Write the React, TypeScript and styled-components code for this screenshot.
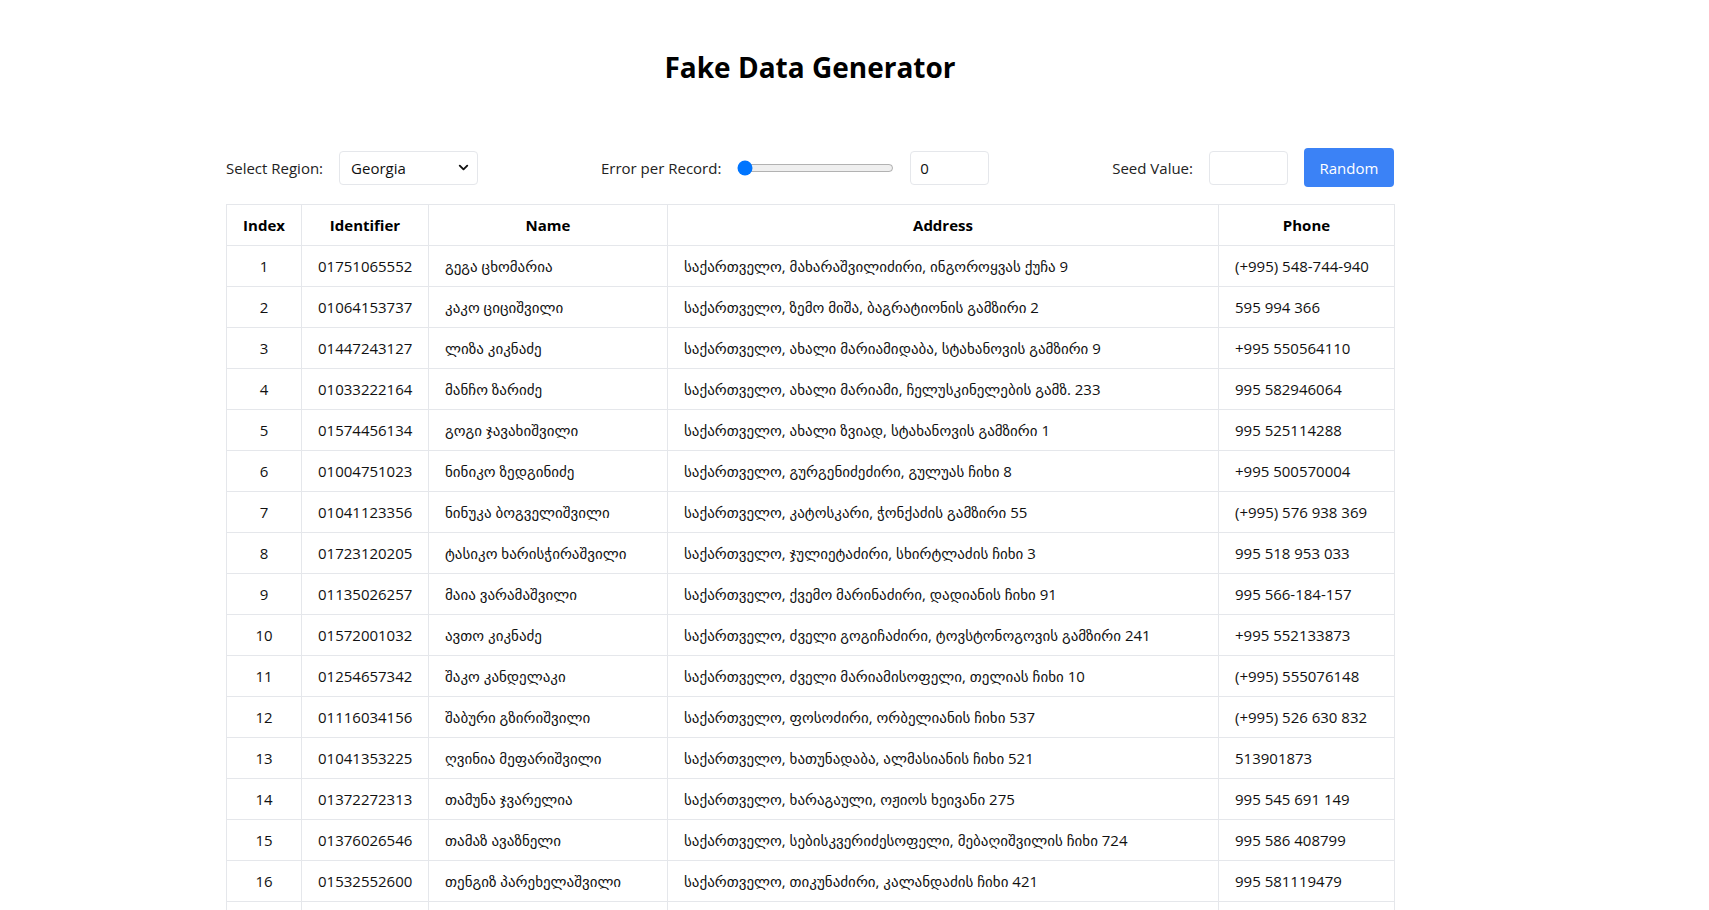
import React, { useState } from 'react';
import styled, { createGlobalStyle } from 'styled-components';
import { ChevronDown } from 'lucide-react';

const GlobalStyle = createGlobalStyle`
    body {
        margin: 0;
        background: #ffffff;
        font-family: "Open Sans", "DejaVu Sans", sans-serif;
        color: #111111;
    }
`;

type Row = {
    id: string;
    name: string;
    address: string;
    phone: string;
};

// 미리 생성된 데이터 (Georgia)
const rows: Row[] = [
    { id: '01751065552', name: 'გეგა ცხომარია', address: 'საქართველო, მახარაშვილიძირი, ინგოროყვას ქუჩა 9', phone: '(+995) 548-744-940' },
    { id: '01064153737', name: 'კაკო ციციშვილი', address: 'საქართველო, ზემო მიშა, ბაგრატიონის გამზირი 2', phone: '595 994 366' },
    { id: '01447243127', name: 'ლიზა კიკნაძე', address: 'საქართველო, ახალი მარიამიდაბა, სტახანოვის გამზირი 9', phone: '+995 550564110' },
    { id: '01033222164', name: 'მანჩო ზარიძე', address: 'საქართველო, ახალი მარიამი, ჩელუსკინელების გამზ. 233', phone: '995 582946064' },
    { id: '01574456134', name: 'გოგი ჯავახიშვილი', address: 'საქართველო, ახალი ზვიად, სტახანოვის გამზირი 1', phone: '995 525114288' },
    { id: '01004751023', name: 'ნინიკო ზედგინიძე', address: 'საქართველო, გურგენიძეძირი, გულუას ჩიხი 8', phone: '+995 500570004' },
    { id: '01041123356', name: 'ნინუკა ბოგველიშვილი', address: 'საქართველო, კატოსკარი, ჭონქაძის გამზირი 55', phone: '(+995) 576 938 369' },
    { id: '01723120205', name: 'ტასიკო ხარისჭირაშვილი', address: 'საქართველო, ჯულიეტაძირი, სხირტლაძის ჩიხი 3', phone: '995 518 953 033' },
    { id: '01135026257', name: 'მაია ვარამაშვილი', address: 'საქართველო, ქვემო მარინაძირი, დადიანის ჩიხი 91', phone: '995 566-184-157' },
    { id: '01572001032', name: 'ავთო კიკნაძე', address: 'საქართველო, ძველი გოგიჩაძირი, ტოვსტონოგოვის გამზირი 241', phone: '+995 552133873' },
    { id: '01254657342', name: 'შაკო კანდელაკი', address: 'საქართველო, ძველი მარიამისოფელი, თელიას ჩიხი 10', phone: '(+995) 555076148' },
    { id: '01116034156', name: 'შაბური გზირიშვილი', address: 'საქართველო, ფოსოძირი, ორბელიანის ჩიხი 537', phone: '(+995) 526 630 832' },
    { id: '01041353225', name: 'ღვინია მეფარიშვილი', address: 'საქართველო, ხათუნადაბა, ალმასიანის ჩიხი 521', phone: '513901873' },
    { id: '01372272313', name: 'თამუნა ჯვარელია', address: 'საქართველო, ხარაგაული, ოჟიოს ხეივანი 275', phone: '995 545 691 149' },
    { id: '01376026546', name: 'თამაზ ავაზნელი', address: 'საქართველო, სებისკვერიძესოფელი, მებაღიშვილის ჩიხი 724', phone: '995 586 408799' },
    { id: '01532552600', name: 'თენგიზ პარეხელაშვილი', address: 'საქართველო, თიკუნაძირი, კალანდაძის ჩიხი 421', phone: '995 581119479' },
    { id: '01289340711', name: 'ნატო ბერიძე', address: 'საქართველო, ახალსოფელი, რუსთაველის ქუჩა 14', phone: '995 577 120 334' },
    { id: '01467201988', name: 'ლევან გელაშვილი', address: 'საქართველო, ზემო ვაკე, ჭავჭავაძის გამზირი 62', phone: '+995 599210045' },
];

const Page = styled.div`
    width: 1168px;
    margin: 0 0 0 226px;
    padding-top: 47px;
`;

const Title = styled.h1`
    margin: 0 0 61px;
    font-size: 28px;
    line-height: 40px;
    font-weight: 700;
    text-align: center;
    color: #000000;
`;

const Controls = styled.div`
    display: flex;
    justify-content: space-between;
    align-items: center;
    height: 39px;
    margin-bottom: 17px;
`;

const Group = styled.div`
    display: flex;
    align-items: center;
    gap: 16px;
`;

const Label = styled.label`
    font-size: 15px;
    color: #222222;
`;

const SelectWrap = styled.div`
    position: relative;
    width: 139px;
    height: 34px;
`;

const Select = styled.select`
    appearance: none;
    width: 100%;
    height: 100%;
    padding: 0 30px 0 11px;
    border: 1px solid #e5e7eb;
    border-radius: 4px;
    background: #ffffff;
    font-family: inherit;
    font-size: 15px;
    color: #111111;
    outline: none;
`;

const Chevron = styled.span`
    position: absolute;
    right: 7px;
    top: 9px;
    display: flex;
    pointer-events: none;
    color: #111111;
`;

const Slider = styled.input`
    width: 157px;
    margin: 0;
`;

const TextInput = styled.input`
    box-sizing: border-box;
    width: 79px;
    height: 34px;
    padding: 0 9px;
    border: 1px solid #e5e7eb;
    border-radius: 4px;
    font-family: inherit;
    font-size: 15px;
    color: #111111;
    outline: none;
`;

const Button = styled.button`
    width: 90px;
    height: 39px;
    border: none;
    border-radius: 4px;
    background: #3b82f6;
    color: #ffffff;
    font-family: inherit;
    font-size: 15px;
    cursor: pointer;
`;

const Table = styled.table`
    width: 1168px;
    table-layout: fixed;
    border-collapse: collapse;
    font-size: 15px;
`;

const Col = styled.col<{ $width: number }>`
    width: ${({ $width }) => $width}px;
`;

const Th = styled.th`
    padding: 9px 16px;
    line-height: 22px;
    border: 1px solid #e5e7eb;
    font-weight: 700;
    text-align: center;
    color: #000000;
`;

const Td = styled.td<{ $center?: boolean }>`
    padding: 9px 16px;
    line-height: 22px;
    border: 1px solid #e5e7eb;
    text-align: ${({ $center }) => ($center ? 'center' : 'left')};
    white-space: nowrap;
    overflow: hidden;
    color: #111111;
`;

const App: React.FC = () => {
    const [region, setRegion] = useState('Georgia');
    const [errors, setErrors] = useState(0);
    const [seed, setSeed] = useState('');

    return (
        <>
            <GlobalStyle />
            <Page>
                <Title>Fake Data Generator</Title>

                <Controls>
                    <Group>
                        <Label>Select Region:</Label>
                        <SelectWrap>
                            <Select value={region} onChange={(e) => setRegion(e.target.value)}>
                                <option>Georgia</option>
                                <option>USA</option>
                                <option>Poland</option>
                            </Select>
                            <Chevron>
                                <ChevronDown size={15} strokeWidth={3} />
                            </Chevron>
                        </SelectWrap>
                    </Group>

                    <Group>
                        <Label>Error per Record:</Label>
                        <Slider
                            type="range"
                            min={0}
                            max={10}
                            step={0.5}
                            value={errors}
                            onChange={(e) => setErrors(Number(e.target.value))}
                        />
                        <TextInput
                            type="text"
                            value={errors}
                            onChange={(e) => setErrors(Number(e.target.value) || 0)}
                        />
                    </Group>

                    <Group>
                        <Label>Seed Value:</Label>
                        <TextInput type="text" value={seed} onChange={(e) => setSeed(e.target.value)} />
                        <Button onClick={() => setSeed(String(Math.floor(Math.random() * 100000)))}>Random</Button>
                    </Group>
                </Controls>

                <Table>
                    <colgroup>
                        <Col $width={75} />
                        <Col $width={127} />
                        <Col $width={239} />
                        <Col $width={551} />
                        <Col $width={176} />
                    </colgroup>
                    <thead>
                        <tr>
                            <Th>Index</Th>
                            <Th>Identifier</Th>
                            <Th>Name</Th>
                            <Th>Address</Th>
                            <Th>Phone</Th>
                        </tr>
                    </thead>
                    <tbody>
                        {rows.map((row, idx) => (
                            <tr key={row.id}>
                                <Td $center>{idx + 1}</Td>
                                <Td $center>{row.id}</Td>
                                <Td>{row.name}</Td>
                                <Td>{row.address}</Td>
                                <Td>{row.phone}</Td>
                            </tr>
                        ))}
                    </tbody>
                </Table>
            </Page>
        </>
    );
};

export default App;
